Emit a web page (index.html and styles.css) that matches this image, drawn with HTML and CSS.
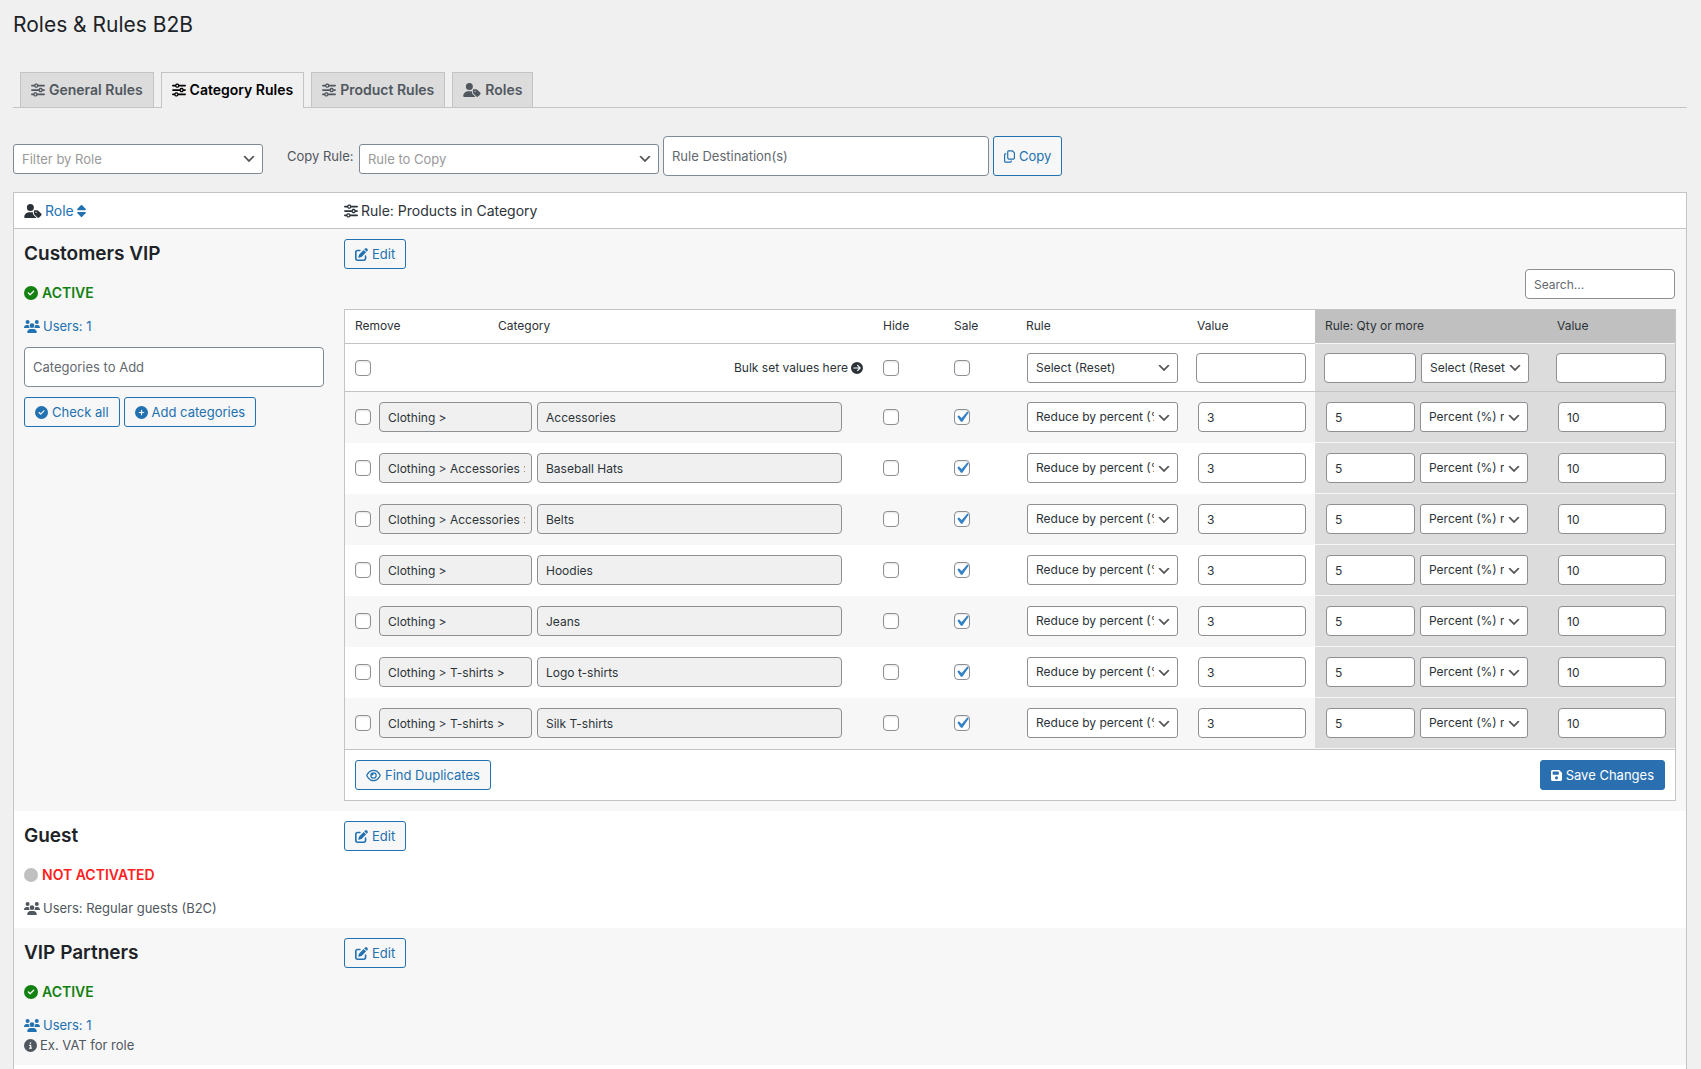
FILE: index.html
```html
<!DOCTYPE html>
<html lang="en">
<head>
<meta charset="utf-8">
<title>Roles &amp; Rules B2B</title>
<link rel="stylesheet" href="styles.css">
</head>
<body>
<svg class="sprite" aria-hidden="true">
<symbol id="sliders" viewBox="0 0 512 512"><path d="M0 416c0 17.700 14.300 32 32 32l54.700 0c12.300 28.300 40.500 48 73.300 48s61-19.700 73.300-48L480 448c17.700 0 32-14.300 32-32s-14.300-32-32-32l-246.700 0c-12.300-28.300-40.500-48-73.300-48s-61 19.700-73.300 48L32 384c-17.700 0-32 14.300-32 32zm128 0a32 32 0 1 1 64 0 32 32 0 1 1 -64 0zM320 256a32 32 0 1 1 64 0 32 32 0 1 1 -64 0zm32-80c-32.800 0-61 19.700-73.300 48L32 224c-17.700 0-32 14.300-32 32s14.300 32 32 32l246.700 0c12.300 28.300 40.500 48 73.300 48s61-19.700 73.300-48l54.700 0c17.700 0 32-14.300 32-32s-14.300-32-32-32l-54.700 0c-12.300-28.300-40.500-48-73.300-48zM192 128a32 32 0 1 1 0-64 32 32 0 1 1 0 64zm73.300-64C253 35.700 224.800 16 192 16s-61 19.700-73.300 48L32 64C14.300 64 0 78.300 0 96s14.300 32 32 32l86.700 0c12.300 28.300 40.500 48 73.300 48s61-19.700 73.300-48L480 128c17.700 0 32-14.300 32-32s-14.300-32-32-32L265.300 64z"/></symbol>
<symbol id="user-tag" viewBox="0 0 640 512"><path d="M224 256A128 128 0 1 0 224 0a128 128 0 1 0 0 256zm-45.700 48C79.800 304 0 383.800 0 482.300C0 498.700 13.300 512 29.700 512H418.300c10 0 18.800-4.900 24.200-12.500l-99.200-99.200c-14.900-14.900-23.300-35.100-23.300-56.100v-33c-15.900-4.700-32.800-7.200-50.300-7.200H178.300zM384 224c-17.700 0-32 14.300-32 32v82.700c0 17 6.700 33.300 18.700 45.300L478.100 491.300c18.700 18.700 49.100 18.700 67.900 0l73.400-73.400c18.700-18.700 18.700-49.100 0-67.900L512 242.700c-12-12-28.300-18.700-45.300-18.700H384zm24 80a24 24 0 1 1 48 0 24 24 0 1 1 -48 0z"/></symbol>
<symbol id="sort" viewBox="0 0 320 512"><path d="M137.400 41.400c12.500-12.500 32.800-12.500 45.300 0l128 128c9.200 9.200 11.900 22.900 6.900 34.900s-16.600 19.800-29.600 19.800H32c-12.900 0-24.600-7.800-29.600-19.800s-2.200-25.700 6.900-34.900l128-128zm0 429.300l-128-128c-9.200-9.200-11.900-22.900-6.900-34.900s16.600-19.800 29.600-19.800H288c12.900 0 24.600 7.800 29.600 19.800s2.200 25.700-6.900 34.900l-128 128c-12.500 12.500-32.800 12.500-45.300 0z"/></symbol>
<symbol id="edit" viewBox="0 0 512 512"><path d="M471.600 21.700c-21.900-21.900-57.300-21.900-79.200 0L362.300 51.700l97.900 97.900 30.100-30.100c21.900-21.900 21.900-57.300 0-79.200L471.600 21.700zm-299.200 220c-6.100 6.100-10.800 13.600-13.500 21.900l-29.600 88.800c-2.900 8.600-.6 18.100 5.800 24.600s15.900 8.700 24.600 5.800l88.800-29.600c8.200-2.700 15.700-7.400 21.900-13.500L437.700 172.300 339.700 74.300 172.400 241.700zM96 64C43 64 0 107 0 160V416c0 53 43 96 96 96H352c53 0 96-43 96-96V320c0-17.700-14.300-32-32-32s-32 14.300-32 32v96c0 17.700-14.300 32-32 32H96c-17.700 0-32-14.300-32-32V160c0-17.700 14.300-32 32-32h96c17.700 0 32-14.300 32-32s-14.300-32-32-32H96z"/></symbol>
<symbol id="check" viewBox="0 0 512 512"><path d="M256 512A256 256 0 1 0 256 0a256 256 0 1 0 0 512zM369 209L241 337c-9.400 9.400-24.600 9.400-33.900 0l-64-64c-9.400-9.400-9.400-24.600 0-33.900s24.600-9.400 33.900 0l47 47L335 175c9.400-9.400 24.600-9.400 33.900 0s9.400 24.600 0 33.900z"/></symbol>
<symbol id="plus" viewBox="0 0 512 512"><path d="M256 512A256 256 0 1 0 256 0a256 256 0 1 0 0 512zM232 344V280H168c-13.300 0-24-10.700-24-24s10.700-24 24-24h64V168c0-13.300 10.700-24 24-24s24 10.700 24 24v64h64c13.300 0 24 10.700 24 24s-10.700 24-24 24H280v64c0 13.300-10.700 24-24 24s-24-10.700-24-24z"/></symbol>
<symbol id="info" viewBox="0 0 512 512"><path d="M256 512A256 256 0 1 0 256 0a256 256 0 1 0 0 512zM216 336h24V272H216c-13.300 0-24-10.700-24-24s10.700-24 24-24h48c13.300 0 24 10.700 24 24v88h8c13.300 0 24 10.700 24 24s-10.700 24-24 24H216c-13.300 0-24-10.700-24-24s10.700-24 24-24zm40-208a32 32 0 1 1 0 64 32 32 0 1 1 0-64z"/></symbol>
<symbol id="arrow" viewBox="0 0 512 512"><path d="M0 256a256 256 0 1 0 512 0A256 256 0 1 0 0 256zM297 385c-9.400 9.400-24.600 9.400-33.900 0s-9.400-24.600 0-33.900l71-71L120 280c-13.300 0-24-10.700-24-24s10.700-24 24-24l214.100 0-71-71c-9.400-9.400-9.400-24.600 0-33.900s24.600-9.400 33.900 0L409 239c9.400 9.400 9.400 24.600 0 33.900L297 385z"/></symbol>
<symbol id="users" viewBox="0 0 640 512"><path d="M144 0a80 80 0 1 1 0 160A80 80 0 1 1 144 0zM512 0a80 80 0 1 1 0 160A80 80 0 1 1 512 0zM0 298.700C0 239.800 47.800 192 106.700 192h42.700c15.900 0 31 3.500 44.600 9.700c-1.300 7.200-1.900 14.700-1.900 22.300c0 38.200 16.800 72.500 43.300 96c-.2 0-.4 0-.7 0H21.300C9.600 320 0 310.400 0 298.700zM405.300 320c-.2 0-.4 0-.7 0c26.600-23.500 43.300-57.800 43.300-96c0-7.600-.7-15-1.900-22.300c13.600-6.300 28.700-9.700 44.600-9.700h42.700C592.200 192 640 239.800 640 298.700c0 11.800-9.600 21.300-21.300 21.300H405.300zM224 224a96 96 0 1 1 192 0 96 96 0 1 1 -192 0zM128 485.300C128 411.700 187.700 352 261.300 352H378.700C452.300 352 512 411.700 512 485.300c0 14.700-11.900 26.700-26.700 26.700H154.700c-14.700 0-26.700-11.900-26.700-26.700z"/></symbol>
<symbol id="copy" viewBox="0 0 448 512"><path d="M384 336H192c-8.800 0-16-7.200-16-16V64c0-8.800 7.200-16 16-16l140.100 0L400 115.900V320c0 8.800-7.200 16-16 16zM192 384H384c35.300 0 64-28.700 64-64V115.900c0-12.700-5.100-24.900-14.100-33.900L366.100 14.100c-9-9-21.200-14.100-33.900-14.100H192c-35.300 0-64 28.700-64 64V320c0 35.300 28.700 64 64 64zM64 128c-35.300 0-64 28.700-64 64V448c0 35.300 28.700 64 64 64H256c35.300 0 64-28.700 64-64V416H272v32c0 8.800-7.200 16-16 16H64c-8.800 0-16-7.200-16-16V192c0-8.800 7.200-16 16-16H96V128H64z"/></symbol>
<symbol id="eye" viewBox="0 0 576 512"><path d="M288 80c-65.200 0-118.800 29.600-159.900 67.700C89.600 183.500 63 226 49.400 256c13.600 30 40.200 72.500 78.600 108.300C169.200 402.400 222.800 432 288 432s118.800-29.600 159.900-67.700C486.400 328.500 513 286 526.600 256c-13.600-30-40.200-72.500-78.600-108.300C406.800 109.600 353.200 80 288 80zM95.400 112.600C142.500 68.800 207.200 32 288 32s145.500 36.800 192.600 80.600c46.800 43.500 78.100 95.400 93 131.100c3.300 7.900 3.300 16.700 0 24.600c-14.900 35.700-46.200 87.700-93 131.100C433.500 443.200 368.800 480 288 480s-145.500-36.800-192.600-80.600C48.600 356 17.300 304 2.500 268.300c-3.300-7.900-3.300-16.700 0-24.600C17.300 208 48.600 156 95.400 112.600zM288 336c44.200 0 80-35.800 80-80s-35.800-80-80-80c-.7 0-1.300 0-2 0c1.300 5.100 2 10.500 2 16c0 35.300-28.700 64-64 64c-5.500 0-10.900-.7-16-2c0 .7 0 1.300 0 2c0 44.200 35.800 80 80 80zm0-208a128 128 0 1 1 0 256 128 128 0 1 1 0-256z"/></symbol>
<symbol id="save" viewBox="0 0 448 512"><path d="M64 32C28.700 32 0 60.700 0 96V416c0 35.300 28.700 64 64 64H384c35.300 0 64-28.700 64-64V173.300c0-17-6.700-33.300-18.700-45.300L352 50.700C340 38.700 323.700 32 306.700 32H64zm0 96c0-17.700 14.300-32 32-32H288c17.700 0 32 14.300 32 32v64c0 17.700-14.300 32-32 32H96c-17.700 0-32-14.300-32-32V128zM224 288a64 64 0 1 1 0 128 64 64 0 1 1 0-128z"/></symbol>
<symbol id="dot" viewBox="0 0 512 512"><circle cx="256" cy="256" r="256"/></symbol>
</svg>

<h1 class="title">Roles &amp; Rules B2B</h1>

<nav class="tabs">
<a class="tab" href="#general"><svg class="icon i14"><use href="#sliders"/></svg>General Rules</a>
<a class="tab tab-active" href="#category"><svg class="icon i14"><use href="#sliders"/></svg>Category Rules</a>
<a class="tab" href="#product"><svg class="icon i14"><use href="#sliders"/></svg>Product Rules</a>
<a class="tab" href="#roles"><svg class="icon i14w"><use href="#user-tag"/></svg>Roles</a>
</nav>

<form class="toolbar">
<select class="select pick pick-role" aria-label="Filter by Role"><option>Filter by Role</option></select>
<label class="copy-label" for="rule-copy">Copy Rule:</label>
<select class="select pick pick-rule" id="rule-copy"><option>Rule to Copy</option></select>
<input class="field tall destination" type="text" placeholder="Rule Destination(s)" aria-label="Rule Destinations">
<button class="button button-tall" type="button"><svg class="icon i13n"><use href="#copy"/></svg>Copy</button>
</form>

<div class="panel">
<table class="roles">
<colgroup><col class="c-role"><col></colgroup>
<thead>
<tr>
<th><span class="line"><svg class="icon i14w"><use href="#user-tag"/></svg><a class="link" href="#sort-role">Role<svg class="icon i14s"><use href="#sort"/></svg></a></span></th>
<th><span class="line"><svg class="icon i14"><use href="#sliders"/></svg>Rule: Products in Category</span></th>
</tr>
</thead>
<tbody>
<tr>
<td>
<h2 class="role-name">Customers VIP</h2>
<p class="status active"><svg class="icon i14"><use href="#check"/></svg>ACTIVE</p>
<p class="users"><a class="link" href="#users-vip"><svg class="icon i13w"><use href="#users"/></svg>Users: 1</a></p>
<input class="field tall add-box" type="text" placeholder="Categories to Add" aria-label="Categories to Add">
<div class="actions">
<button class="button" type="button"><svg class="icon i13"><use href="#check"/></svg>Check all</button>
<button class="button" type="button"><svg class="icon i13"><use href="#plus"/></svg>Add categories</button>
</div>
</td>
<td>
<button class="button" type="button"><svg class="icon i13"><use href="#edit"/></svg>Edit</button>
<div class="search-row"><input class="field search" type="search" placeholder="Search..." aria-label="Search"></div>
<div class="rules-box">
<table class="rules">
<colgroup><col class="c-remove"><col><col class="c-hide"><col class="c-sale"><col class="c-rule"><col class="c-value"><col class="c-qty"><col class="c-value"></colgroup>
<thead>
<tr><th>Remove</th><th>Category</th><th>Hide</th><th>Sale</th><th>Rule</th><th>Value</th><th class="q">Rule: Qty or more</th><th class="q">Value</th></tr>
</thead>
<tbody>
<tr class="bulk">
<td><input class="cb" type="checkbox" aria-label="Remove all"></td>
<td><span class="bulk-hint">Bulk set values here<svg class="icon i12"><use href="#arrow"/></svg></span></td>
<td><input class="cb" type="checkbox" aria-label="Hide all"></td>
<td><input class="cb" type="checkbox" aria-label="Sale all"></td>
<td class="rule-cell"><select class="select" aria-label="Bulk rule"><option>Select (Reset)</option></select></td>
<td class="v"><input class="field" type="text" aria-label="Bulk value"></td>
<td class="q v"><div class="pair"><input class="field" type="text" aria-label="Bulk quantity"><select class="select" aria-label="Bulk quantity rule"><option>Select (Reset)</option></select></div></td>
<td class="q v"><input class="field" type="text" aria-label="Bulk quantity value"></td>
</tr>
<tr>
<td colspan="2"><div class="cat"><input class="cb" type="checkbox" aria-label="Remove"><input class="field path" value="Clothing &gt;" readonly aria-label="Parent"><input class="field name" value="Accessories" readonly aria-label="Category"></div></td>
<td><input class="cb" type="checkbox" aria-label="Hide"></td><td><input class="cb" type="checkbox" checked aria-label="Sale"></td>
<td class="rule-cell"><select class="select" aria-label="Rule"><option>Reduce by percent (%)</option></select></td>
<td class="v"><input class="field" value="3" aria-label="Value"></td>
<td class="q v"><div class="pair"><input class="field" value="5" aria-label="Quantity"><select class="select" aria-label="Quantity rule"><option>Percent (%) reduction</option></select></div></td>
<td class="q v"><input class="field" value="10" aria-label="Quantity value"></td>
</tr>
<tr>
<td colspan="2"><div class="cat"><input class="cb" type="checkbox" aria-label="Remove"><input class="field path" value="Clothing &gt; Accessories &gt;" readonly aria-label="Parent"><input class="field name" value="Baseball Hats" readonly aria-label="Category"></div></td>
<td><input class="cb" type="checkbox" aria-label="Hide"></td><td><input class="cb" type="checkbox" checked aria-label="Sale"></td>
<td class="rule-cell"><select class="select" aria-label="Rule"><option>Reduce by percent (%)</option></select></td>
<td class="v"><input class="field" value="3" aria-label="Value"></td>
<td class="q v"><div class="pair"><input class="field" value="5" aria-label="Quantity"><select class="select" aria-label="Quantity rule"><option>Percent (%) reduction</option></select></div></td>
<td class="q v"><input class="field" value="10" aria-label="Quantity value"></td>
</tr>
<tr>
<td colspan="2"><div class="cat"><input class="cb" type="checkbox" aria-label="Remove"><input class="field path" value="Clothing &gt; Accessories &gt;" readonly aria-label="Parent"><input class="field name" value="Belts" readonly aria-label="Category"></div></td>
<td><input class="cb" type="checkbox" aria-label="Hide"></td><td><input class="cb" type="checkbox" checked aria-label="Sale"></td>
<td class="rule-cell"><select class="select" aria-label="Rule"><option>Reduce by percent (%)</option></select></td>
<td class="v"><input class="field" value="3" aria-label="Value"></td>
<td class="q v"><div class="pair"><input class="field" value="5" aria-label="Quantity"><select class="select" aria-label="Quantity rule"><option>Percent (%) reduction</option></select></div></td>
<td class="q v"><input class="field" value="10" aria-label="Quantity value"></td>
</tr>
<tr>
<td colspan="2"><div class="cat"><input class="cb" type="checkbox" aria-label="Remove"><input class="field path" value="Clothing &gt;" readonly aria-label="Parent"><input class="field name" value="Hoodies" readonly aria-label="Category"></div></td>
<td><input class="cb" type="checkbox" aria-label="Hide"></td><td><input class="cb" type="checkbox" checked aria-label="Sale"></td>
<td class="rule-cell"><select class="select" aria-label="Rule"><option>Reduce by percent (%)</option></select></td>
<td class="v"><input class="field" value="3" aria-label="Value"></td>
<td class="q v"><div class="pair"><input class="field" value="5" aria-label="Quantity"><select class="select" aria-label="Quantity rule"><option>Percent (%) reduction</option></select></div></td>
<td class="q v"><input class="field" value="10" aria-label="Quantity value"></td>
</tr>
<tr>
<td colspan="2"><div class="cat"><input class="cb" type="checkbox" aria-label="Remove"><input class="field path" value="Clothing &gt;" readonly aria-label="Parent"><input class="field name" value="Jeans" readonly aria-label="Category"></div></td>
<td><input class="cb" type="checkbox" aria-label="Hide"></td><td><input class="cb" type="checkbox" checked aria-label="Sale"></td>
<td class="rule-cell"><select class="select" aria-label="Rule"><option>Reduce by percent (%)</option></select></td>
<td class="v"><input class="field" value="3" aria-label="Value"></td>
<td class="q v"><div class="pair"><input class="field" value="5" aria-label="Quantity"><select class="select" aria-label="Quantity rule"><option>Percent (%) reduction</option></select></div></td>
<td class="q v"><input class="field" value="10" aria-label="Quantity value"></td>
</tr>
<tr>
<td colspan="2"><div class="cat"><input class="cb" type="checkbox" aria-label="Remove"><input class="field path" value="Clothing &gt; T-shirts &gt;" readonly aria-label="Parent"><input class="field name" value="Logo t-shirts" readonly aria-label="Category"></div></td>
<td><input class="cb" type="checkbox" aria-label="Hide"></td><td><input class="cb" type="checkbox" checked aria-label="Sale"></td>
<td class="rule-cell"><select class="select" aria-label="Rule"><option>Reduce by percent (%)</option></select></td>
<td class="v"><input class="field" value="3" aria-label="Value"></td>
<td class="q v"><div class="pair"><input class="field" value="5" aria-label="Quantity"><select class="select" aria-label="Quantity rule"><option>Percent (%) reduction</option></select></div></td>
<td class="q v"><input class="field" value="10" aria-label="Quantity value"></td>
</tr>
<tr>
<td colspan="2"><div class="cat"><input class="cb" type="checkbox" aria-label="Remove"><input class="field path" value="Clothing &gt; T-shirts &gt;" readonly aria-label="Parent"><input class="field name" value="Silk T-shirts" readonly aria-label="Category"></div></td>
<td><input class="cb" type="checkbox" aria-label="Hide"></td><td><input class="cb" type="checkbox" checked aria-label="Sale"></td>
<td class="rule-cell"><select class="select" aria-label="Rule"><option>Reduce by percent (%)</option></select></td>
<td class="v"><input class="field" value="3" aria-label="Value"></td>
<td class="q v"><div class="pair"><input class="field" value="5" aria-label="Quantity"><select class="select" aria-label="Quantity rule"><option>Percent (%) reduction</option></select></div></td>
<td class="q v"><input class="field" value="10" aria-label="Quantity value"></td>
</tr>
</tbody>
</table>
<div class="rules-foot">
<button class="button" type="button"><svg class="icon i13e"><use href="#eye"/></svg>Find Duplicates</button>
<button class="button button-primary" type="submit"><svg class="icon i13n"><use href="#save"/></svg>Save Changes</button>
</div>
</div>
</td>
</tr>
<tr>
<td>
<h2 class="role-name">Guest</h2>
<p class="status inactive"><svg class="icon i14"><use href="#dot"/></svg>NOT ACTIVATED</p>
<p class="users"><svg class="icon i13w"><use href="#users"/></svg>Users: Regular guests (B2C)</p>
</td>
<td><button class="button" type="button"><svg class="icon i13"><use href="#edit"/></svg>Edit</button></td>
</tr>
<tr>
<td>
<h2 class="role-name">VIP Partners</h2>
<p class="status active"><svg class="icon i14"><use href="#check"/></svg>ACTIVE</p>
<p class="users"><a class="link" href="#users-partners"><svg class="icon i13w"><use href="#users"/></svg>Users: 1</a></p>
<p class="vat"><svg class="icon i13"><use href="#info"/></svg>Ex. VAT for role</p>
</td>
<td><button class="button" type="button"><svg class="icon i13"><use href="#edit"/></svg>Edit</button></td>
</tr>
</tbody>
</table>
</div>
</body>
</html>
```

FILE: styles.css
```css
* { box-sizing: border-box; }

body {
  display: flex;
  flex-direction: column;
  min-height: 100vh;
  margin: 0;
  padding: 0 14px 0 13px;
  background: #f0f0f0;
  color: #50575e;
  font: 13px/20px Inter, "Liberation Sans", sans-serif;
}

h1, h2, p { margin: 0; }
input, select, button { margin: 0; font: inherit; }

.sprite { position: absolute; width: 0; height: 0; }

.icon { flex: none; width: 13px; height: 13px; fill: currentColor; }
.i12 { width: 12px; height: 12px; }
.i13n { width: 11px; }
.i13w { width: 16px; }
.i13e { width: 15px; }
.i14 { width: 14px; height: 14px; }
.i14w { width: 18px; height: 14px; }
.i14s { width: 9px; height: 14px; }

.title {
  padding-top: 10px;
  color: #1d2327;
  font-size: 21px;
  font-weight: 400;
  line-height: 30px;
}

/* Tabs */
.tabs {
  display: flex;
  gap: 7px;
  margin-top: 32px;
  padding-left: 7px;
  border-bottom: 1px solid #c3c4c7;
}
.tab {
  display: flex;
  align-items: center;
  gap: 4px;
  padding: 5px 10px;
  border: 1px solid #c3c4c7;
  border-bottom: 0;
  background: #dcdcdc;
  color: #50575e;
  font-size: 14px;
  font-weight: 600;
  line-height: 24px;
  text-decoration: none;
}
.tab-active {
  margin-bottom: -1px;
  padding-bottom: 6px;
  background: #f0f0f0;
  color: #000;
}

/* Controls */
.field, .select {
  display: block;
  width: 100%;
  height: 30px;
  padding: 0 8px;
  border: 1px solid #8c8f94;
  border-radius: 4px;
  background-color: #fff;
  color: #2c3338;
  font-size: 12px;
}
.field::placeholder { color: #646970; opacity: 1; }
.field:read-only { background-color: #f0f0f0; }
.select {
  appearance: none;
  padding-right: 23px;
  border-radius: 3px;
  background-image: url("data:image/svg+xml,%3Csvg xmlns='http://www.w3.org/2000/svg' viewBox='0 0 20 20'%3E%3Cpath d='M5 6l5 5 5-5 2 1-7 7-7-7 2-1z' fill='%23555'/%3E%3C/svg%3E");
  background-position: right 5px top 55%;
  background-repeat: no-repeat;
  background-size: 16px 16px;
}
.tall { height: 40px; font-size: 13px; border-color: #7e8993; }
.cb {
  display: block;
  flex: none;
  appearance: none;
  width: 16px;
  height: 16px;
  border: 1px solid #8c8f94;
  border-radius: 4px;
  background: #fff center / 22px 22px no-repeat;
  box-shadow: inset 0 1px 2px rgba(0, 0, 0, .1);
}
.cb:checked {
  background-image: url("data:image/svg+xml,%3Csvg xmlns='http://www.w3.org/2000/svg' viewBox='0 0 20 20'%3E%3Cpath d='M14.83 4.89l1.34.94-5.81 8.38H9.02L5.78 9.67l1.34-1.25 2.57 2.4z' fill='%233582c4'/%3E%3C/svg%3E");
}
.button {
  display: flex;
  align-items: center;
  gap: 4px;
  height: 30px;
  padding: 0 10px;
  border: 1px solid #2271b1;
  border-radius: 3px;
  background: #f7f7f7;
  color: #2271b1;
  font-size: 13px;
  white-space: nowrap;
}
.button-tall { height: 40px; }
.button-primary { background: #2a70b0; border-color: #2a70b0; color: #fff; }

/* Toolbar */
.toolbar {
  display: flex;
  align-items: center;
  margin-top: 28px;
  margin-bottom: 16px;
}
.pick { margin-top: 5px; border-color: #7e8993; color: #999; font-size: 13px; }
.pick-role { width: 250px; margin-right: 24px; }
.copy-label { width: 72px; }
.pick-rule { width: 300px; }
.destination { width: 326px; margin: 0 4px; }

/* Role list */
.panel {
  flex: 1;
  border: 1px solid #c3c4c7;
  border-bottom: 0;
  background: #fff;
}
.roles, .rules {
  width: 100%;
  border-collapse: separate;
  border-spacing: 0;
  table-layout: fixed;
}
.c-role { width: 320px; }
.roles > thead th {
  height: 36px;
  padding: 0 10px;
  border-bottom: 1px solid #c3c4c7;
  color: #2c3338;
  font-size: 14px;
  font-weight: 400;
  text-align: left;
}
.roles > tbody > tr > td { padding: 10px; vertical-align: top; }
.roles > tbody > tr:nth-child(odd) > td { background: #f7f7f7; }
.line, .link { display: flex; align-items: center; gap: 3px; }
.link { color: #2271b1; text-decoration: none; }

.role-name { color: #1d2327; font-size: 19px; font-weight: 600; line-height: 30px; }
.status, .users, .vat { display: flex; align-items: center; gap: 3px; }
.status { gap: 4px; margin-top: 14px; font-size: 14px; font-weight: 600; }
.active { color: #128112; }
.inactive { color: #ff2020; }
.inactive .icon { fill: #c0c0c0; }
.users { margin-top: 13px; }
.add-box { margin-top: 11px; }
.actions { display: flex; gap: 4px; margin-top: 10px; }

/* Rules table */
.search-row { display: flex; justify-content: flex-end; padding-right: 1px; }
.search { width: 150px; }
.rules-box {
  margin-top: 10px;
  border: 1px solid #c3c4c7;
  background: #fff;
  color: #2c3338;
  font-size: 12px;
}
.c-remove { width: 143px; }
.c-hide { width: 71px; }
.c-sale { width: 72px; }
.c-rule { width: 171px; }
.c-value { width: 128px; }
.c-qty { width: 232px; }
.rules th {
  height: 34px;
  padding: 0 10px 2px;
  border-bottom: 1px solid #c3c4c7;
  font-weight: 400;
  text-align: left;
}
.rules td { height: 51px; padding: 0 10px; border-bottom: 1px solid transparent; }
.rules tbody tr:nth-child(even) td { background: #f7f7f7; }
.rules tbody tr td.q { border-bottom-color: #f7f7f7; background: #dcdcdc; }
.rules th.q { border-bottom-color: #f7f7f7; background: #c0c0c0; }
.rules tbody tr.bulk td { height: 48px; border-bottom-color: #c3c4c7; }
.rules .rule-cell { padding-left: 11px; padding-right: 9px; }
.rules .v { padding-left: 11px; padding-right: 9px; }
.rules .bulk .v { padding-left: 9px; }
.bulk-hint { display: flex; align-items: center; justify-content: flex-end; gap: 3px; }
.cat { display: flex; align-items: center; padding-right: 21px; }
.path { flex: none; width: 153px; margin: 0 5px 0 8px; padding-right: 6px; }
.name { flex: 1; }
.pair { display: grid; grid-template-columns: 89px 108px; gap: 5px; }
.bulk .pair { grid-template-columns: 92px 108px; }
.rules-foot {
  display: flex;
  justify-content: space-between;
  padding: 10px;
  border-top: 1px solid #c3c4c7;
}
```
